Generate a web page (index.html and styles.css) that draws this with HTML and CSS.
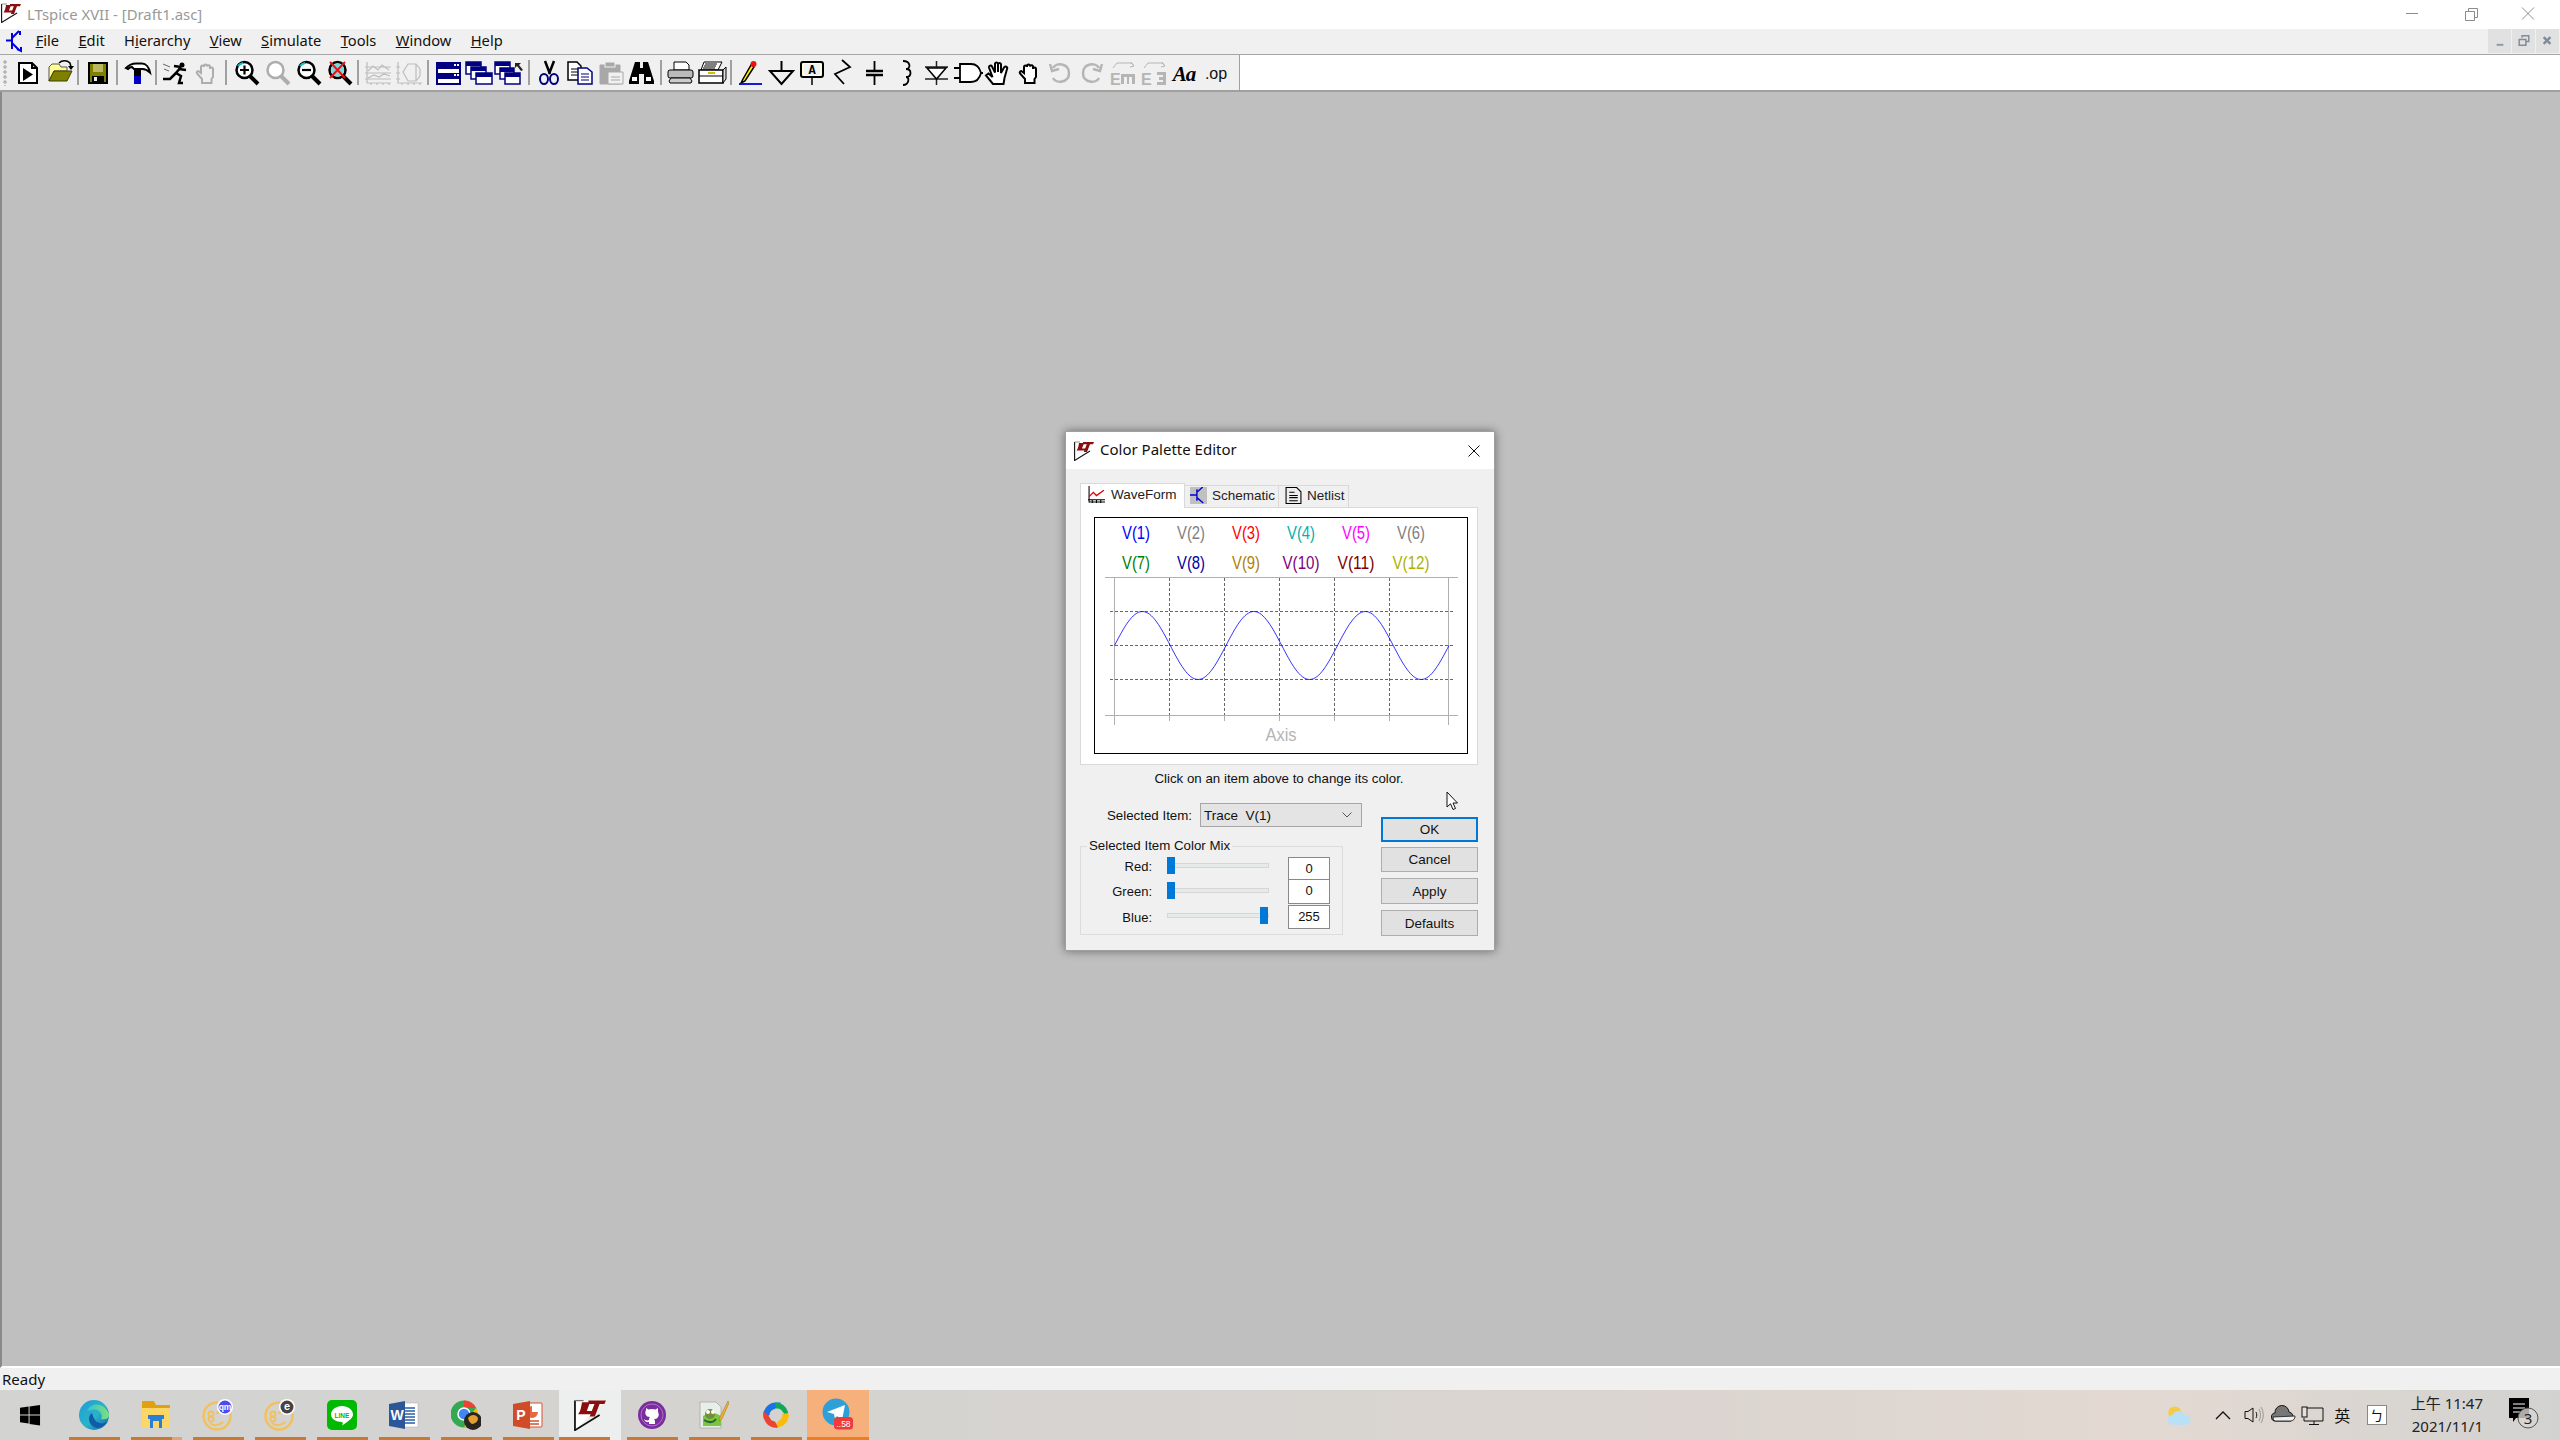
FILE: index.html
```html
<!DOCTYPE html>
<html lang="en">
<head>
<meta charset="utf-8">
<title>LTspice XVII - [Draft1.asc]</title>
<link rel="stylesheet" href="styles.css">
</head>
<body>
<svg class="defs" width="0" height="0">
  <defs>
    <symbol id="lt" viewBox="0 0 20 20">
      <path d="M.6 1H20L.6 19.500Z" fill="#fff"/>
      <path d="M.6 1V19.500L16 10" fill="none" stroke="#111" stroke-width="1.100"/>
      <path d="M.6 1H6" fill="none" stroke="#777" stroke-width=".8"/>
      <path d="M5 2H10L8 7.500H14L13 9.500H2.500C4 8 4.500 5 5 2Z" fill="#8a1010"/>
      <path d="M9 1H20L19 3.200H16L13 11H9.800L12.800 3.200H9Z" fill="#8a1010"/>
    </symbol>
    <symbol id="hand" viewBox="0 0 31 30">
      <path d="M10 26L3 17.500L5.500 15.500L9.500 19L6 9.500A1.600 1.600 0 019 8.500L12 14.500V5.500A1.600 1.600 0 0115 5.500V14V6A1.600 1.600 0 0118 6V15L21 9.500A1.600 1.600 0 0124 11L21.500 20L20.500 26Z"/>
    </symbol>
    <symbol id="hand2" viewBox="0 0 31 30">
      <path d="M11 25V21L6 15.500C5 14 7 12.500 8 13.500L10 15V9A1.500 1.500 0 0113 9V8A1.500 1.500 0 0116 8V8.500A1.500 1.500 0 0119 9V11A1.500 1.500 0 0122 11V19L20.500 21V25Z"/>
    </symbol>
    <symbol id="mag" viewBox="0 0 31 30">
      <circle cx="14.500" cy="12" r="8" fill="#fff" stroke="currentColor" stroke-width="2.500"/>
      <path d="M20 18L28 26" stroke="currentColor" stroke-width="4" fill="none"/>
    </symbol>
  </defs>
</svg>

<header class="titlebar">
  <svg class="title-icon"><use href="#lt"/></svg>
  <span class="title-text">LTspice XVII - [Draft1.asc]</span>
  <div class="win-controls">
    <svg class="win-btn" viewBox="0 0 58 29"><path d="M23 13.500H35" stroke="#8c8c8c" fill="none"/></svg>
    <svg class="win-btn" viewBox="0 0 58 29"><path d="M24.500 11.500h9v9h-9zM27.500 11.500v-3h9v9h-3" stroke="#8c8c8c" fill="none"/></svg>
    <svg class="win-btn" viewBox="0 0 58 29"><path d="M23 7.500L35 19.500M35 7.500L23 19.500" stroke="#8c8c8c" fill="none"/></svg>
  </div>
</header>

<nav class="menubar">
  <svg class="menu-icon" viewBox="0 0 18 24"><path d="M0 10.500H6M6 3V19M6 8L13 1M6 13L13 20M14 1V5M11 19L15 21L15 17" stroke="#0000e0" stroke-width="2" fill="none"/></svg>
  <div class="menu-items">
    <span class="menu-item"><u>F</u>ile</span>
    <span class="menu-item"><u>E</u>dit</span>
    <span class="menu-item">H<u>i</u>erarchy</span>
    <span class="menu-item"><u>V</u>iew</span>
    <span class="menu-item"><u>S</u>imulate</span>
    <span class="menu-item"><u>T</u>ools</span>
    <span class="menu-item"><u>W</u>indow</span>
    <span class="menu-item"><u>H</u>elp</span>
  </div>
  <div class="mdi-controls">
    <span class="mdi-btn"><svg viewBox="0 0 24 23"><path d="M9 15h7v2H9z" fill="#8d99a6"/></svg></span>
    <span class="mdi-btn"><svg viewBox="0 0 24 23"><path d="M7.500 10.500h7v6h-7zM10.500 8.500v-2h7v6h-3" fill="none" stroke="#7f8c99" stroke-width="1.500"/></svg></span>
    <span class="mdi-btn"><svg viewBox="0 0 24 23"><path d="M8 8l7 7M15 8l-7 7" stroke="#7f8c99" stroke-width="2.500"/></svg></span>
  </div>
</nav>

<div class="toolbar-row">
  <div class="toolbar">
    <span class="grip"></span>
    <svg class="tb" viewBox="0 0 31 30"><path d="M7 5h13l5 5v15H7zM20 5v5h5" fill="#fff" stroke="#000" stroke-width="2"/><path d="M11 10l10 6.500-10 6.500z"/></svg>
    <svg class="tb" viewBox="0 0 31 30"><path d="M6 23V9l3-3h7l2 3h6v4H11z" fill="#ffff90" stroke="#555"/><path d="M6 23l5-10h18l-5 10z" fill="#808000" stroke="#404000"/><path d="M16 5c3-3 8-3 11 0l1 4" stroke="#000" stroke-width="1.500" fill="none"/><path d="M25 8h6l-3 4z"/></svg>
    <span class="sep"></span>
    <svg class="tb" viewBox="0 0 31 30"><rect x="7" y="5" width="18" height="20" fill="#808000" stroke="#000" stroke-width="2"/><rect x="11" y="6" width="10" height="8" fill="#b8b860"/><rect x="10" y="18" width="12" height="7" fill="#000"/><rect x="12" y="19" width="3" height="4" fill="#eee"/></svg>
    <span class="sep"></span>
    <svg class="tb" viewBox="0 0 31 30"><path d="M5 10c3-3 6-4.500 10-4.500h6c4 0 7 4 8 9-3-3-5-4-9-3.500H13l-2-2c-2 0-3 1-4 2z" fill="#fff" stroke="#000" stroke-width="2"/><rect x="13" y="12" width="7" height="6"/><rect x="13" y="18" width="7" height="8" fill="#0000c8"/></svg>
    <span class="sep"></span>
    <svg class="tb" viewBox="0 0 31 30"><circle cx="22" cy="7" r="2.500"/><path d="M21 9l-5 6 5 3 -2 7h4M16 15l-6 6H3M19 11l7 1M21 9l-7-1" stroke="#000" stroke-width="2.500" fill="none"/><path d="M3 6l7 3M4 11l5 2" stroke="#666" fill="none"/></svg>
    <svg class="tb hand-off"><use href="#hand2"/></svg>
    <span class="sep"></span>
    <svg class="tb mag-on"><use href="#mag"/><path d="M8 8a8 8 0 0 1 5-3" stroke="#00c8c8" stroke-width="2" fill="none" /><path d="M14.500 7.500v9M10 12h9" stroke="#000" stroke-width="2.200"/></svg>
    <svg class="tb mag-off"><use href="#mag"/></svg>
    <svg class="tb mag-on"><use href="#mag"/><path d="M8 8a8 8 0 0 1 5-3" stroke="#00c8c8" stroke-width="2" fill="none"/><path d="M10 12h9" stroke="#000" stroke-width="2.200"/></svg>
    <svg class="tb mag-on"><use href="#mag"/><circle cx="14.500" cy="12" r="6.500" fill="#7fd8e0"/><path d="M7 4l15 16M22 4L7 20" stroke="#f01010" stroke-width="2"/></svg>
    <span class="sep"></span>
    <svg class="tb ghost" viewBox="0 0 31 30"><path d="M5 4v21h24M3 21h26M3 15h26M3 9h26M9 25v2M15 25v2M21 25v2M27 25v2M6 13l5-5 5 4 4-5 7 5M6 20l6-3 5 2 5-3 6 2"/></svg>
    <svg class="ghost tb" viewBox="0 0 31 30"><path d="M5 4v21h24M3 21h4M3 15h4M3 9h4M9 25v2M15 25v2M21 25v2M27 25v2M10 14l5-8h8l4 5v7l-4 5h-8zM23 6v17"/></svg>
    <span class="sep"></span>
    <svg class="tb" viewBox="0 0 31 30"><path d="M5 5h23v21H5z" fill="#fff" stroke="#000080" stroke-width="2"/><path d="M5 5h23v6H5zM5 15h23v6H5z" fill="#000080"/><path d="M22 6h2v2h-2zM25 6h2v2h-2zM22 16h2v2h-2zM25 16h2v2h-2z" fill="#fff"/></svg>
    <svg class="tb" viewBox="0 0 31 30"><g class="cascade"><rect x="3" y="4" width="15" height="12"/><path class="bar" d="M3 4h15v4H3z"/><rect x="8" y="9" width="15" height="12"/><path class="bar" d="M8 9h15v4H8z"/><rect x="13" y="15" width="16" height="11"/><path class="bar" d="M13 15h16v4H13z"/></g></svg>
    <svg class="tb" viewBox="0 0 31 30"><g class="cascade"><rect x="1" y="4" width="15" height="12"/><path class="bar" d="M1 4h15v4H1z"/><rect x="6" y="10" width="14" height="11"/><path class="bar" d="M6 10h14v4H6z"/><rect x="11" y="15" width="15" height="11"/><path class="bar" d="M11 15h15v4H11z"/></g><path d="M21 5h6l-2 2 4 5-2 1-4-5-2 2z" fill="#222"/></svg>
    <span class="sep"></span>
    <svg class="tb" viewBox="0 0 31 30"><path d="M12 3l5 13M21 3l-5 13" stroke="#000" stroke-width="2.500"/><ellipse cx="11" cy="21" rx="4" ry="5" fill="none" stroke="#000080" stroke-width="2"/><ellipse cx="21" cy="21" rx="4" ry="5" fill="none" stroke="#000080" stroke-width="2"/></svg>
    <svg class="tb" viewBox="0 0 31 30"><path d="M4 4h9l4 4v14H4z" fill="#fff" stroke="#000" stroke-width="1.500"/><path d="M7 11h7M7 14h7M7 17h7" stroke="#000"/><path d="M14 10h9l5 4v12H14z" fill="#fff" stroke="#000080" stroke-width="1.500"/><path d="M17 16h8M17 19h8M17 22h8" stroke="#000080"/></svg>
    <svg class="tb" viewBox="0 0 31 30"><path d="M5 7h20v19H5z" fill="#a8a8a8" stroke="#a8a8a8"/><rect x="10" y="4" width="10" height="5" fill="#a8a8a8" stroke="#f0f0f0"/><path d="M13 14h15v12H13z" fill="#f0f0f0" stroke="#a8a8a8"/><path d="M16 19h9M16 22h9" stroke="#a8a8a8"/></svg>
    <svg class="tb" viewBox="0 0 31 30"><path d="M9 4h5v6h3V4h5l6 19v3H18V16h-5v10H3v-3z"/><path d="M6 19h5v4H6zM20 19h5v4h-5z" fill="#fff"/></svg>
    <span class="sep"></span>
    <svg class="tb" viewBox="0 0 31 30"><path d="M9 4h12l3 3v5H9z" fill="#fff" stroke="#000"/><rect x="3" y="12" width="25" height="8" rx="2" fill="#bbb" stroke="#000"/><path d="M6 20h19l2 3-1 2H5l-1-2z" fill="#ccc" stroke="#000"/></svg>
    <svg class="tb" viewBox="0 0 31 30"><path d="M8 4h18l-4 8H5z" fill="#fff" stroke="#000"/><path d="M9 6h12M8 8h12M7 10h12" stroke="#000"/><path d="M3 12h24v13H3z" fill="#fff" stroke="#000" stroke-width="1.500"/><path d="M3 18h24" stroke="#000"/><path d="M12 15h7" stroke="#d0c000" stroke-width="2"/><path d="M27 12l3-3v12l-3 4z" fill="#ddd" stroke="#000"/></svg>
    <span class="sep"></span>
    <svg class="tb" viewBox="0 0 31 30"><path d="M8 21l-2 4 4-2 9-14-3-2z" fill="#ffec00" stroke="#000" stroke-width="1.500"/><circle cx="18.500" cy="6" r="3" fill="#f01010"/><path d="M4 26h23" stroke="#0000d0" stroke-width="1.800"/></svg>
    <svg class="tb" viewBox="0 0 31 30"><path d="M15.500 3V13M4 13H27L15.500 26Z" fill="none" stroke="#000" stroke-width="2"/></svg>
    <svg class="tb" viewBox="0 0 31 30"><rect x="4" y="4" width="22" height="15" rx="2" fill="#ffffe0" stroke="#000" stroke-width="2"/><rect x="7" y="6" width="16" height="11" fill="#f0f0f0"/><path d="M15 20v7" stroke="#000" stroke-width="1.500"/><text x="15" y="16" class="tb-mono">A</text></svg>
    <svg class="tb" viewBox="0 0 31 30"><path d="M14 2l8 7-15 7 9 10" fill="none" stroke="#000" stroke-width="1.800"/></svg>
    <svg class="tb" viewBox="0 0 31 30"><path d="M15.500 3V12M15.500 18V27" stroke="#000" stroke-width="1.800"/><path d="M7 13h17M7 17h17" stroke="#000" stroke-width="2.500"/></svg>
    <svg class="tb" viewBox="0 0 31 30"><path d="M13 3c8 0 8 8 3 8 6 0 6 8 0 8 4 0 3 8-3 8" fill="none" stroke="#000" stroke-width="1.800"/></svg>
    <svg class="tb" viewBox="0 0 31 30"><path d="M15.500 3V27M4 9H27M4 21H27" stroke="#222" stroke-width="1.500"/><path d="M6 10H25L15.500 21Z" fill="#fff" stroke="#000" stroke-width="1.500"/></svg>
    <svg class="tb" viewBox="0 0 31 30"><path d="M8 6h11c7 0 9 5 10 9-1 4-3 9-10 9H8zM2 10h6M2 20h6M29 15h2" fill="#fff" stroke="#000" stroke-width="1.800"/></svg>
    <svg class="tb hand-on"><use href="#hand"/></svg>
    <svg class="tb hand-on"><use href="#hand2"/></svg>
    <svg class="tb" viewBox="0 0 31 30"><path d="M8 10c3-6 16-5 16 5s-13 11-16 5M5 6l2 7 7-2" fill="none" stroke="#b5b5b5" stroke-width="2.500"/></svg>
    <svg class="tb" viewBox="0 0 31 30"><path d="M23 10c-3-6-16-5-16 5s13 11 16 5M26 6l-2 7-7-2" fill="none" stroke="#b5b5b5" stroke-width="2.500"/></svg>
    <svg class="tb" viewBox="0 0 31 30"><path d="M6 10l4-5h14l3 3M24 4l3 4-4 1" fill="none" stroke="#b5b5b5"/><text x="3" y="27" class="tb-ghost">E</text><path d="M14 16h14v10h-3v-7h-3v7h-2v-7h-3v7h-3z" fill="#b5b5b5"/></svg>
    <svg class="tb" viewBox="0 0 31 30"><path d="M6 10l4-5h14l3 3M24 4l3 4-4 1" fill="none" stroke="#b5b5b5"/><text x="3" y="27" class="tb-ghost">E</text><path d="M19 14h9v13h-9v-3h6v-2h-4v-3h4v-2h-6z" fill="#b5b5b5"/></svg>
    <svg class="tb" viewBox="0 0 31 30"><text x="15" y="23" class="tb-aa">Aa</text></svg>
    <svg class="tb" viewBox="0 0 31 30"><text x="16" y="21" class="tb-op">.op</text></svg>
  </div>
</div>

<main class="workspace">
  <section class="dialog">
    <div class="dlg-title">
      <svg class="dlg-icon"><use href="#lt"/></svg>
      <span class="dlg-title-text">Color Palette Editor</span>
      <svg class="dlg-close" viewBox="0 0 14 14"><path d="M1.500 1.500L12.500 12.500M12.500 1.500L1.500 12.500" stroke="#111" fill="none" stroke-width="1"/></svg>
    </div>
    <div class="dlg-body">
      <div class="tabs">
        <div class="tab tab-active">
          <svg class="tab-icon" viewBox="0 0 16 16"><path d="M1 0V15H16M0 13h16M4 13v3M8 13v3M12 13v3" stroke="#000" fill="none"/><path d="M1 10L5 6l3 3 7-5" stroke="#e00000" stroke-width="1.300" fill="none"/></svg>
          <span>WaveForm</span>
        </div>
        <div class="tab">
          <svg class="tab-icon tab-icon-sch" viewBox="0 0 16 16"><path d="M0 7.500h6M6.500 2v11M6.500 5L12 0M6.500 10l6 5" stroke="#0000d0" stroke-width="1.300" fill="none"/></svg>
          <span>Schematic</span>
        </div>
        <div class="tab">
          <svg class="tab-icon" viewBox="0 0 16 16"><path d="M1 .5h10l4 4v11H1zM4 5h5M4 8h8M4 10h8M4 13h8" fill="#eee" stroke="#000"/></svg>
          <span>Netlist</span>
        </div>
      </div>
      <div class="panel">
        <div class="chart">
          <svg class="chart-svg" viewBox="0 0 372 235">
            <g class="grid-solid"><path d="M10 59.500H363M10 197.500H363M19.500 59.500V207M353.500 59.500V207M74.500 197V203M129.500 197V203M184.500 197V203M239.500 197V203M294.500 197V203"/></g>
            <g class="grid-dash"><path d="M74.500 60V197M129.500 60V197M184.500 60V197M239.500 60V197M294.500 60V197M15 93.500H358M15 127.500H358M15 161.500H358"/></g>
            <path class="sine" d="M19.500 127.500c9.090-17.400 17.790-34 27.875-34s18.785 16.600 27.875 34c9.090 17.400 17.790 34 27.875 34s18.785-16.600 27.875-34c9.090-17.400 17.790-34 27.875-34s18.785 16.600 27.875 34c9.090 17.400 17.790 34 27.875 34s18.785-16.600 27.875-34c9.090-17.400 17.790-34 27.875-34s18.785 16.600 27.875 34c9.090 17.400 17.790 34 27.875 34s18.785-16.600 27.875-34"/>
            <g class="vlabels">
              <text x="41" y="20.500" textLength="28" lengthAdjust="spacingAndGlyphs" fill="#0000ff">V(1)</text>
              <text x="96" y="20.500" textLength="28" lengthAdjust="spacingAndGlyphs" fill="#808080">V(2)</text>
              <text x="151" y="20.500" textLength="28" lengthAdjust="spacingAndGlyphs" fill="#ff0000">V(3)</text>
              <text x="206" y="20.500" textLength="28" lengthAdjust="spacingAndGlyphs" fill="#00b0b0">V(4)</text>
              <text x="261" y="20.500" textLength="28" lengthAdjust="spacingAndGlyphs" fill="#ff00ff">V(5)</text>
              <text x="316" y="20.500" textLength="28" lengthAdjust="spacingAndGlyphs" fill="#808080">V(6)</text>
              <text x="41" y="50.500" textLength="28" lengthAdjust="spacingAndGlyphs" fill="#008000">V(7)</text>
              <text x="96" y="50.500" textLength="28" lengthAdjust="spacingAndGlyphs" fill="#0000a0">V(8)</text>
              <text x="151" y="50.500" textLength="28" lengthAdjust="spacingAndGlyphs" fill="#b08000">V(9)</text>
              <text x="206" y="50.500" textLength="37" lengthAdjust="spacingAndGlyphs" fill="#800080">V(10)</text>
              <text x="261" y="50.500" textLength="37" lengthAdjust="spacingAndGlyphs" fill="#800000">V(11)</text>
              <text x="316" y="50.500" textLength="37" lengthAdjust="spacingAndGlyphs" fill="#b0b000">V(12)</text>
            </g>
            <text class="axis" x="186" y="223" textLength="31" lengthAdjust="spacingAndGlyphs">Axis</text>
          </svg>
        </div>
      </div>
      <p class="hint">Click on an item above to change its color.</p>
      <div class="lower">
        <div class="lower-left">
          <div class="combo-row">
            <label class="combo-label">Selected Item:</label>
            <div class="combo"><span>Trace&nbsp; V(1)</span>
              <svg class="combo-arrow" viewBox="0 0 10 6"><path d="M.5.5L5 5 9.500.5" fill="none" stroke="#555"/></svg>
            </div>
          </div>
          <div class="group">
            <div class="legend">Selected Item Color Mix</div>
            <div class="mix-row mix-red">
              <span class="mix-label">Red:</span>
              <div class="slider"><span class="track"></span><span class="thumb"></span></div>
              <span class="num">0</span>
            </div>
            <div class="mix-row mix-green">
              <span class="mix-label">Green:</span>
              <div class="slider"><span class="track"></span><span class="thumb"></span></div>
              <span class="num">0</span>
            </div>
            <div class="mix-row mix-blue">
              <span class="mix-label">Blue:</span>
              <div class="slider"><span class="track"></span><span class="thumb thumb-max"></span></div>
              <span class="num">255</span>
            </div>
          </div>
        </div>
        <div class="buttons">
          <button class="btn btn-default">OK</button>
          <button class="btn">Cancel</button>
          <button class="btn btn-apply">Apply</button>
          <button class="btn btn-defaults">Defaults</button>
        </div>
      </div>
    </div>
  </section>
  <svg class="cursor" viewBox="0 0 14 20"><path d="M1 1V16L4.500 12.800L7 18.500L9.500 17.500L7 12H11.500Z" fill="#fff" stroke="#111" stroke-width="1"/></svg>
</main>

<footer class="statusbar">Ready</footer>

<div class="taskbar">
  <div class="start"><svg viewBox="0 0 22 22"><path d="M0 3l9-1.300V10H0zM10 1.500L21 0v10H10zM0 11h9v8.300L0 18zM10 11h11v10.500L10 20z" fill="#000"/></svg></div>
  <div class="task"><svg class="ti" viewBox="0 0 30 30"><defs><linearGradient id="edge" x1="0" y1="0" x2="1" y2="1"><stop offset="0" stop-color="#1e9cd8"/><stop offset=".55" stop-color="#2bb3c9"/><stop offset="1" stop-color="#0f5ca8"/></linearGradient><linearGradient id="edge2" x1="0" y1="0" x2="1" y2="0"><stop offset="0" stop-color="#35c1d0"/><stop offset="1" stop-color="#7fe07a"/></linearGradient></defs><circle cx="15" cy="15" r="15" fill="url(#edge)"/><path d="M8 11C11 3 24 1 30 14c0 5-4 6-8 5 3-5-3-11-9-9-2 0-4 1-5 1z" fill="url(#edge2)"/><path d="M13 13c-5 3-4 13 5 15 5 0 9-3 11-7-3 3-8 3-11 1-3-2-4-6-5-9z" fill="#0f5ca8"/></svg></div>
  <div class="task task-split"><svg class="ti" viewBox="0 0 30 30"><path d="M1 2a1 1 0 011-1h11l2 4h13a1 1 0 011 1v5H1z" fill="#e0a010"/><path d="M1 8h28v19a1 1 0 01-1 1H2a1 1 0 01-1-1z" fill="#fcd768"/><path d="M9 17h12v11h-3v-7h-6v7H9z" fill="#2a7fd4"/><path d="M7 15h16v4H7z" fill="#2a7fd4"/></svg></div>
  <div class="task"><svg class="ti ti-wide" viewBox="0 0 32 32"><circle cx="15" cy="17" r="13.500" fill="none" stroke="#f2c15f" stroke-width="2.500"/><circle cx="9" cy="15" r="2.500" fill="none" stroke="#f2c15f" stroke-width="2"/><circle cx="9" cy="20" r="2.500" fill="none" stroke="#f2c15f" stroke-width="2"/><path d="M15 15a2 2 0 014 0M8 24c3 3 9 3 13-1" fill="none" stroke="#f2c15f" stroke-width="2"/><circle cx="23" cy="8" r="8" fill="#fff"/><circle cx="23" cy="8" r="6.500" fill="#4b4bf0"/><text x="23" y="10.500" class="badge-q">qm</text></svg></div>
  <div class="task"><svg class="ti ti-wide" viewBox="0 0 32 32"><circle cx="15" cy="17" r="13.500" fill="none" stroke="#f2c15f" stroke-width="2.500"/><circle cx="9" cy="15" r="2.500" fill="none" stroke="#f2c15f" stroke-width="2"/><circle cx="9" cy="20" r="2.500" fill="none" stroke="#f2c15f" stroke-width="2"/><path d="M15 15a2 2 0 014 0M8 24c3 3 9 3 13-1" fill="none" stroke="#f2c15f" stroke-width="2"/><circle cx="23" cy="8" r="8" fill="#fff"/><circle cx="23" cy="8" r="6.500" fill="#444"/><text x="23" y="11" class="badge-e">e</text></svg></div>
  <div class="task"><svg class="ti" viewBox="0 0 30 30"><rect width="30" height="30" rx="5" fill="#00b900"/><path d="M15 6c6 0 11 3.700 11 8.500 0 3-3 6-11 11 1-2 1-3 0-3.500C9 22 4 19 4 14.500 4 9.700 9 6 15 6z" fill="#fff"/><text x="15" y="17.500" class="line-txt">LINE</text></svg></div>
  <div class="task"><svg class="ti" viewBox="0 0 30 30"><path d="M11 3h18v24H11z" fill="#fff" stroke="#aab" stroke-width=".5"/><path d="M16 8h10M16 11h10M16 14h10M16 17h10M16 20h10M16 23h10" stroke="#2b5da8" stroke-width="1.300"/><path d="M0 4L16 1V29L0 26Z" fill="#2b579a"/><text x="8" y="20" class="w-txt">W</text></svg></div>
  <div class="task"><svg class="ti" viewBox="0 0 30 30"><circle cx="13" cy="14" r="13.500" fill="#34a853"/><path d="M13 .5A13.500 13.500 0 0125 8H13z" fill="#ea4335"/><path d="M25 8a13.500 13.500 0 01-12 19.500L18 17z" fill="#fbbc05"/><circle cx="13" cy="14" r="6" fill="#4285f4" stroke="#fff" stroke-width="1.500"/><circle cx="22" cy="21" r="9" fill="#2a2420"/><path d="M17 18c3-4 8-4 10 0 0 4-3 5-5 6-2 0-4-2-5-6z" fill="#e0a030"/></svg></div>
  <div class="task"><svg class="ti" viewBox="0 0 30 30"><path d="M12 3h16a1 1 0 011 1v22a1 1 0 01-1 1H12z" fill="#fff" stroke="#d35230" stroke-width="1"/><path d="M17 21h9M17 24h9" stroke="#d35230" stroke-width="1.500"/><path d="M19 6a6 6 0 106 6h-6z" fill="#e5663f"/><path d="M0 4L17 1V29L0 26Z" fill="#d04b27"/><text x="8" y="20" class="w-txt">P</text></svg></div>
  <div class="task task-current"><svg class="ti ti-lt"><use href="#lt"/></svg></div>
  <div class="task"><svg class="ti" viewBox="0 0 30 30"><circle cx="15" cy="15" r="14" fill="#7b2d9e"/><circle cx="15" cy="15" r="11" fill="#7b2d9e" stroke="#c9a6da" stroke-width=".6"/><path d="M9 8l2.500 1.500c2-.7 5-.7 7 0L21 8v4c1 2 1 4 0 5-1 2-3 2-4 2 1 1 1 2 1 5h-6v-2c-2 .5-4 0-5-3 1 1 3 2 5 1 0-1 0-2 1-3-2 0-4-1-4-2-1-1-1-3 0-5z" fill="#fff"/></svg></div>
  <div class="task"><svg class="ti" viewBox="0 0 30 30"><path d="M1 2h16l5 5v21H1z" fill="#e8efe8" stroke="#aaa" stroke-width=".8"/><path d="M4 16c6-4 12-4 18 0v10H4z" fill="#7cc442"/><circle cx="11" cy="14" r="5" fill="#6f8f3a"/><circle cx="9" cy="12" r="2" fill="#fff"/><circle cx="14" cy="12" r="2" fill="#fff"/><path d="M5 20c5 3 9 3 12-1" stroke="#263" stroke-width="2" fill="none"/><path d="M29 1L21 17l-1 4 3-2L30 3z" fill="#f0b030" stroke="#a07010" stroke-width=".5"/></svg></div>
  <div class="task"><svg class="ti" viewBox="0 0 30 30"><circle cx="15" cy="15" r="10" fill="none" stroke="#fff" stroke-width="1"/><path d="M3 19A12.500 12.500 0 0115 2.500h5L14 9A6.500 6.500 0 008.500 15z" fill="#1a73e8"/><path d="M14 2.500A12.500 12.500 0 0127 12l-.5 6-5-6.500A6.500 6.500 0 0015 8.500z" fill="#0fa958"/><path d="M27.500 13A12.500 12.500 0 0116 27.500l-5 0 7-7A6.500 6.500 0 0021.500 14z" fill="#fbbc05"/><path d="M17 27.500A12.500 12.500 0 012.500 15l0-4 6 6A6.500 6.500 0 0014 21.500z" fill="#ea4335"/></svg></div>
  <div class="task task-alert"><svg class="ti ti-wide" viewBox="0 0 32 32"><circle cx="14" cy="14" r="13.500" fill="#2f9fd8"/><path d="M5 14L23 7l-3 15-5-4-2 3-1-5z" fill="#fff"/><rect x="12" y="19" width="19" height="12.500" rx="3.500" fill="#ee3a3a"/><text x="21.500" y="29" class="tele-txt">..58</text></svg></div>
  <div class="tray">
    <svg class="tray-weather" viewBox="0 0 26 20"><circle cx="9" cy="8" r="6" fill="#f7c948"/><path d="M7 19a4.500 4.500 0 010-9 6 6 0 0111 0 4.500 4.500 0 012 9z" fill="#b8e0f7"/></svg>
    <svg class="tray-i" viewBox="0 0 30 30"><path d="M8 19l7-7 7 7" fill="none" stroke="#111" stroke-width="1.300"/></svg>
    <svg class="tray-i" viewBox="0 0 30 30"><path d="M7 11.500h3L15 8v14l-5-3.500H7z" fill="none" stroke="#111"/><path d="M18 12c1 2 1 4 0 6" fill="none" stroke="#111"/><path d="M21 9c2 4 2 8 0 12M23 7c3 5 3 11 0 16" fill="none" stroke="#999"/></svg>
    <svg class="tray-i" viewBox="0 0 30 30"><path d="M8 21a4 4 0 01-1-8 7 7 0 0114-1 5 5 0 012 9z" fill="#777" stroke="#111"/><path d="M5 17a4 4 0 002 4h16a5 5 0 004-5z" fill="#eee" stroke="#111" stroke-width=".8"/></svg>
    <svg class="tray-i" viewBox="0 0 30 30"><path d="M6 8h19v13H6v-3M16 21v3M11 24.500h10" fill="none" stroke="#111"/><rect x="4" y="7" width="5" height="10" fill="#e8e0da" stroke="#111"/></svg>
    <span class="ime">英</span>
    <span class="ime-box">ㄅ</span>
    <div class="clock"><span>上午 11:47</span><span>2021/11/1</span></div>
    <div class="notify"><svg viewBox="0 0 32 34"><path d="M0 0h20v20H7l-3 4v-4H0z" fill="#000"/><path d="M4 6h12M4 10h12M4 14h8" stroke="#fff" stroke-width="1.200"/><circle cx="19" cy="20" r="10" fill="#d8d6d2" fill-opacity=".8" stroke="#555"/><text x="19" y="25.500" class="notify-n">3</text></svg></div>
  </div>
</div>
</body>
</html>
```

FILE: styles.css
```css
* { box-sizing: border-box; }
html, body { margin: 0; padding: 0; }
body {
  width: 2560px; height: 1440px; overflow: hidden;
  display: flex; flex-direction: column;
  font-family: "Noto Sans", "Liberation Sans", sans-serif;
  color: #111; background: #fff;
}
.defs { position: absolute; }

/* title bar */
.titlebar { height: 29px; background: #fff; display: flex; align-items: center; flex: none; }
.title-icon { width: 20px; height: 20px; margin: -3px 6px 0 1px; }
.title-text { font-size: 14.900px; color: #999; margin-top: -2px; }
.win-controls { margin-left: auto; display: flex; padding-right: 3px; }
.win-btn { width: 58px; height: 29px; }

/* menu */
.menubar { height: 26px; flex: none; background: #f0f0f0; border-bottom: 1px solid #a6a6a6; display: flex; align-items: center; }
.menu-icon { width: 18px; height: 24px; margin-left: 6px; flex: none; }
.menu-items { display: flex; margin-left: 2px; }
.menu-item { font-size: 14.700px; padding: 0 9.650px; line-height: 24px; margin-top: -4px; }
.mdi-controls { margin-left: auto; display: flex; gap: 1px; padding-right: 1px; align-self: flex-start; }
.mdi-btn { width: 23px; height: 24px; background: #e1e1e1; display: block; }
.mdi-btn svg { width: 23px; height: 23px; display: block; }

/* toolbar */
.toolbar-row { height: 37px; flex: none; background: #fff; border-bottom: 2px solid #a0a0a0; }
.toolbar { width: 1240px; height: 35px; background: #f0f0f0; border-right: 1px solid #a0a0a0; display: flex; align-items: center; }
.grip { width: 12px; height: 26px; background: radial-gradient(circle at 5px 2px, #b5b5b5 1.500px, transparent 1.800px) 0 0 / 12px 5px repeat-y; flex: none; }
.tb { width: 31px; height: 30px; flex: none; display: block; overflow: hidden; }
.sep { width: 8px; height: 25px; flex: none; background: linear-gradient(#a0a0a0, #a0a0a0) center / 2px 100% no-repeat; }
.hand-off { fill: #f0f0f0; stroke: #adadad; stroke-width: 2; }
.hand-on { fill: #fff; stroke: #000; stroke-width: 2; }
.mag-on { color: #000; }
.mag-off { color: #adadad; }
.ghost path { fill: none; stroke: #bdbdbd; stroke-width: 1.200; }
.cascade rect { fill: #fff; stroke: #000080; stroke-width: 1.500; }
.cascade .bar { fill: #000080; }
.tb-mono { font: 700 12px "Liberation Mono", monospace; text-anchor: middle; }
.tb-ghost { font: 700 16px "Liberation Sans", sans-serif; fill: #b5b5b5; }
.tb-aa { font: italic 700 21px "Liberation Serif", serif; text-anchor: middle; fill: #000; letter-spacing: -1px; }
.tb-op { font: 400 16px "Liberation Sans", sans-serif; text-anchor: middle; fill: #111; }

/* workspace */
.workspace { flex: 1; position: relative; background: #bfbfbf; border-left: 2px solid #8a8a8a; border-bottom: 2px solid #fff; }
.dialog {
  position: absolute; left: 1063px; top: 339px; width: 430px; height: 520px;
  background: #f0f0f0; border: 1px solid #a0a0a0;
  box-shadow: 0 0 9px rgba(0,0,0,.45);
  font-family: "Liberation Sans", sans-serif; font-size: 13px;
}
.dlg-title { height: 37px; background: #fff; display: flex; align-items: center; padding: 0 13px 0 8px; }
.dlg-icon { width: 20px; height: 20px; margin-right: 6px; }
.dlg-title-text { font: 15px "Noto Sans", sans-serif; color: #111; margin-top: -4px; }
.dlg-close { width: 14px; height: 14px; margin-left: auto; }
.dlg-body { padding: 14px 15px 0 14px; }

.tabs { display: flex; height: 24px; align-items: flex-end; position: relative; z-index: 1; }
.tab { height: 22px; background: #f0f0f0; border: 1px solid #d9d9d9; border-bottom: 0; display: flex; align-items: center; gap: 5px; padding: 0 2px 2px 5px; font-size: 13.500px; color: #222; margin-right: -1px; }
.tab-active { height: 25px; width: 105px; margin-bottom: -1px; background: #fff; padding: 0 0 4px 7px; gap: 6px; }
.tab:nth-child(2) { width: 95px; }
.tab:nth-child(3) { width: 71px; padding-left: 6px; }
.tab-icon { width: 17px; height: 17px; flex: none; }
.tab-icon-sch { background: #c0c0c0; }

.panel { width: 398px; height: 258px; background: #fff; border: 1px solid #d9d9d9; padding: 9px 0 0 13px; }
.chart { width: 374px; height: 237px; border: 1px solid #000; }
.chart-svg { display: block; width: 372px; height: 235px; }
.grid-solid path { stroke: #b0b0b0; fill: none; }
.grid-dash path { stroke: #666; stroke-dasharray: 3 2; fill: none; }
.sine { fill: none; stroke: #0000ff; stroke-width: .8; }
.vlabels text { font: 18px "Liberation Sans", sans-serif; text-anchor: middle; }
.axis { font: 18px "Liberation Sans", sans-serif; fill: #b5b5b5; text-anchor: middle; }

.hint { margin: 0; width: 398px; height: 30px; line-height: 28px; text-align: center; font-size: 13.300px; color: #111; }
.lower { display: flex; gap: 19px; width: 399px; }
.lower-left { width: 282px; padding-top: 8px; }
.combo-row { display: flex; align-items: center; height: 24px; justify-content: flex-end; gap: 8px; }
.combo-label { font-size: 13.300px; }
.combo { width: 162px; height: 24px; background: #e4e4e4; border: 1px solid #a6a6a6; display: flex; align-items: center; justify-content: space-between; padding: 0 9px 0 3px; font-size: 13.500px; }
.combo-arrow { width: 10px; height: 6px; }
.group { width: 263px; height: 89px; margin-top: 19px; border: 1px solid #dcdcdc; }
.legend { width: fit-content; margin: -9px 0 0 6px; padding: 0 2px; background: #f0f0f0; line-height: 16px; height: 19px; font-size: 13.300px; }
.mix-row { display: flex; align-items: flex-start; width: 249px; }
.mix-label { width: 71px; text-align: right; line-height: 24px; }
.mix-red .mix-label { line-height: 20px; }
.slider { position: relative; width: 102px; height: 17px; margin: 2px 19px 0 15px; flex: none; }
.mix-red .slider { margin-top: 0; }
.track { display: block; position: absolute; left: 0; right: 0; top: 6px; height: 5px; background: #e7eaea; border: 1px solid #d6d6d6; }
.thumb { position: absolute; left: 0; top: 0; width: 8px; height: 17px; background: #0078d7; }
.thumb-max { left: 93px; }
.num { width: 42px; height: 24px; background: #fff; border: 1px solid #888; text-align: center; line-height: 22px; flex: none; }
.mix-red .num { height: 23px; }
.mix-green .num { margin-top: -1px; height: 25px; }
.mix-blue { margin-top: 2px; }
.mix-blue .num { margin-top: -1px; }
.mix-blue .slider { margin-top: 1px; }

.buttons { width: 97px; padding-top: 22px; display: flex; flex-direction: column; gap: 5px; }
.btn { width: 97px; height: 25px; padding: 0; background: #e1e1e1; border: 1px solid #adadad; font: 13.500px "Liberation Sans", sans-serif; color: #111; }
.btn-default { border: 2px solid #0078d7; }
.btn-apply { height: 26px; margin-top: 1px; }
.btn-defaults { height: 26px; margin-top: 1px; }

.cursor { position: absolute; left: 1444px; top: 699px; width: 14px; height: 20px; }

/* status */
.statusbar { height: 22px; flex: none; background: #f0f0f0; font-size: 15px; padding-left: 2px; line-height: 22px; }

/* taskbar */
.taskbar { height: 50px; flex: none; display: flex; align-items: center; background: linear-gradient(90deg, #d3d3d2 0%, #d5d3d0 35%, #dcd5d0 70%, #e3d9d2 84%, #d2d2d0 100%); }
.start { width: 63px; height: 50px; display: flex; align-items: center; justify-content: center; padding-right: 3px; }
.start svg { width: 21px; height: 21px; }
.task { width: 62px; height: 50px; display: flex; align-items: center; justify-content: center; flex: none; position: relative; padding-right: 1px; background: linear-gradient(#c77a35, #c77a35) 6px 100% / 51px 3px no-repeat; }
.ti { width: 30px; height: 30px; display: block; }
.ti-wide { width: 32px; height: 32px; }
.ti-lt { width: 32px; height: 32px; }
.task-split { background: linear-gradient(#c77a35, #c77a35) 6px 100% / 41px 3px no-repeat, linear-gradient(#dda878, #dda878) 47px 100% / 10px 3px no-repeat; }
.task-current { background: linear-gradient(#c77a35, #c77a35) 0 100% / 51px 3px no-repeat, #edeeee; }
.task-alert { background: #f6b07c; border-bottom: 3px solid #ee7e22; }
.badge-q { font: 700 8.500px "Liberation Sans", sans-serif; fill: #fff; text-anchor: middle; }
.badge-e { font: 700 11px "Liberation Sans", sans-serif; fill: #fff; text-anchor: middle; }
.line-txt { font: 700 6.500px "Liberation Sans", sans-serif; fill: #00b900; text-anchor: middle; }
.w-txt { font: 700 14px "Liberation Sans", sans-serif; fill: #fff; text-anchor: middle; }
.tele-txt { font: 8.500px "Liberation Sans", sans-serif; fill: #fff; text-anchor: middle; }

.tray { margin-left: auto; height: 50px; display: flex; align-items: center; }
.tray-weather { width: 28px; height: 22px; margin-right: 15px; }
.tray-i { width: 30px; height: 30px; flex: none; }
.ime { width: 29px; text-align: center; font: 16px "Noto Sans CJK TC", sans-serif; color: #111; }
.ime-box { width: 20px; height: 20px; margin: 0 24px 0 10px; border: 1px solid #888; background: #fff; font: 14px/18px "Noto Sans CJK TC", sans-serif; text-align: center; color: #111; }
.clock { display: flex; flex-direction: column; align-items: flex-end; font: 15px/23px "Noto Sans", "Noto Sans CJK TC", sans-serif; color: #222; }
.notify { width: 77px; height: 34px; padding-left: 26px; }
.notify svg { width: 32px; height: 34px; display: block; }
.notify-n { font: 15px "Noto Sans", sans-serif; fill: #222; text-anchor: middle; }
```
